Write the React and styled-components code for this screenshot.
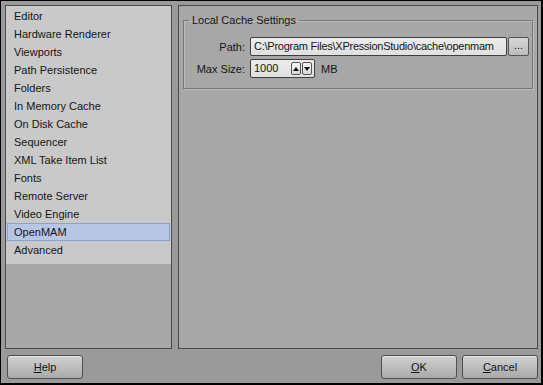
import React from "react";
import styled, { createGlobalStyle } from "styled-components";

const Global = createGlobalStyle`
  html, body { margin: 0; padding: 0; background: #000; }
  body { font-family: Tahoma, "Liberation Sans", "DejaVu Sans", sans-serif; font-size: 11px; color: #151515; }
`;

const Frame = styled.div`
  width: 543px;
  height: 385px;
  box-sizing: border-box;
  border-top: 1px solid #000;
  border-left: 1px solid #000;
  border-right: 2px solid #000;
  border-bottom: 2px solid #000;
  background: #9a9a9a;
  display: flex;
  flex-direction: column;
  padding: 4px 3px 4px 4px;
`;

const Body = styled.div`
  display: flex;
  gap: 6px;
  height: 345px;
`;

const Sidebar = styled.div`
  flex: none;
  width: 167px;
  box-sizing: border-box;
  border: 1px solid #4a4a4a;
  background: #a8a8a8;
  display: flex;
  flex-direction: column;
`;

const List = styled.ul`
  list-style: none;
  margin: 0;
  padding: 1px 1px 5px 1px;
  background: #c9c9c9;
`;

const Item = styled.li`
  height: 18px;
  line-height: 17px;
  padding-left: 6px;
  box-sizing: border-box;
  border: 1px solid ${(p) => (p.$selected ? "#8e9fcb" : "transparent")};
  background: ${(p) => (p.$selected ? "#b8c6e6" : "transparent")};
  white-space: nowrap;
`;

const Content = styled.div`
  flex: 1;
  min-width: 0;
  box-sizing: border-box;
  border: 1px solid #4a4a4a;
  background: #a7a7a7;
  padding: 8px 4px 0 4px;
`;

const Group = styled.fieldset`
  margin: 0;
  min-width: 0;
  border: 1px solid #777;
  box-shadow: inset 1px 1px 0 #bcbcbc, 1px 1px 0 #bcbcbc;
  padding: 11px 3px 8px 8px;
  height: 75px;
  box-sizing: border-box;
  display: grid;
  grid-template-columns: 53px 1fr;
  row-gap: 3px;
  column-gap: 5px;
  align-items: center;
  align-content: start;
`;

const Legend = styled.legend`
  padding: 0 3px;
  margin-left: -3px;
  color: #151515;
`;

const Label = styled.label`
  text-align: right;
  white-space: nowrap;
`;

const Row = styled.div`
  display: flex;
  align-items: center;
  gap: 6px;
`;

const Input = styled.div`
  box-sizing: border-box;
  height: ${(p) => p.$h || 19}px;
  width: ${(p) => (p.$w ? `${p.$w}px` : "auto")};
  flex: ${(p) => (p.$w ? "none" : "1")};
  min-width: 0;
  border: 1px solid #3f3f3f;
  border-radius: 2px;
  background: linear-gradient(#ececec, #e0e0e0);
  padding: 0 3px;
  line-height: 17px;
  letter-spacing: ${(p) => (p.$tight ? "-0.25px" : "0")};
  white-space: nowrap;
  overflow: hidden;
  display: flex;
  align-items: center;
  justify-content: space-between;
`;

const PathRow = styled.div`
  display: flex;
  align-items: center;
  min-width: 0;
`;

const Ellipsis = styled.div`
  flex: none;
  width: 21px;
  height: 19px;
  box-sizing: border-box;
  border: 1px solid #555;
  border-radius: 2px;
  background: linear-gradient(#d6d6d6, #bcbcbc);
  text-align: center;
  line-height: 15px;
  margin-left: 1px;
`;

const Spin = styled.div`
  display: flex;
  gap: 1px;
  margin-right: -1px;
`;

const SpinBtn = styled.div`
  width: 10px;
  height: 13px;
  box-sizing: border-box;
  border: 1px solid #555;
  border-radius: 2px;
  background: linear-gradient(#f4f4f4, #d8d8d8);
  display: flex;
  align-items: center;
  justify-content: center;
`;

const Footer = styled.div`
  display: flex;
  align-items: center;
  margin-top: 6px;
`;

const Spacer = styled.div`
  flex: 1;
`;

const Button = styled.button`
  width: 76px;
  height: 24px;
  box-sizing: border-box;
  border: 1px solid #4f4f4f;
  border-radius: 3px;
  background: linear-gradient(#d2d2d2, #a9a9a9);
  box-shadow: inset 0 1px 0 #e4e4e4;
  font-family: inherit;
  font-size: 11px;
  color: #151515;
  padding: 0;
  margin-left: ${(p) => p.$ml || 0}px;
  u { text-decoration: underline; }
`;

const items = [
  "Editor",
  "Hardware Renderer",
  "Viewports",
  "Path Persistence",
  "Folders",
  "In Memory Cache",
  "On Disk Cache",
  "Sequencer",
  "XML Take Item List",
  "Fonts",
  "Remote Server",
  "Video Engine",
  "OpenMAM",
  "Advanced",
];

export default function App() {
  return (
    <>
      <Global />
      <Frame>
        <Body>
          <Sidebar>
            <List>
              {items.map((t) => (
                <Item key={t} $selected={t === "OpenMAM"}>
                  {t}
                </Item>
              ))}
            </List>
          </Sidebar>
          <Content>
            <Group>
              <Legend>Local Cache Settings</Legend>
              <Label>Path:</Label>
              <PathRow>
                <Input $tight>C:\Program Files\XPressionStudio\cache\openmam</Input>
                <Ellipsis>...</Ellipsis>
              </PathRow>
              <Label>Max Size:</Label>
              <Row>
                <Input $w={65}>
                  <span>1000</span>
                  <Spin>
                    <SpinBtn>
                      <svg width="6" height="4" viewBox="0 0 6 4"><path d="M0 4 L3 0 L6 4 Z" fill="#111" /></svg>
                    </SpinBtn>
                    <SpinBtn>
                      <svg width="6" height="4" viewBox="0 0 6 4"><path d="M0 0 L3 4 L6 0 Z" fill="#111" /></svg>
                    </SpinBtn>
                  </Spin>
                </Input>
                <span>MB</span>
              </Row>
            </Group>
          </Content>
        </Body>
        <Footer>
          <Button $ml={2}><u>H</u>elp</Button>
          <Spacer />
          <Button><u>O</u>K</Button>
          <Button $ml={5}><u>C</u>ancel</Button>
        </Footer>
      </Frame>
    </>
  );
}
